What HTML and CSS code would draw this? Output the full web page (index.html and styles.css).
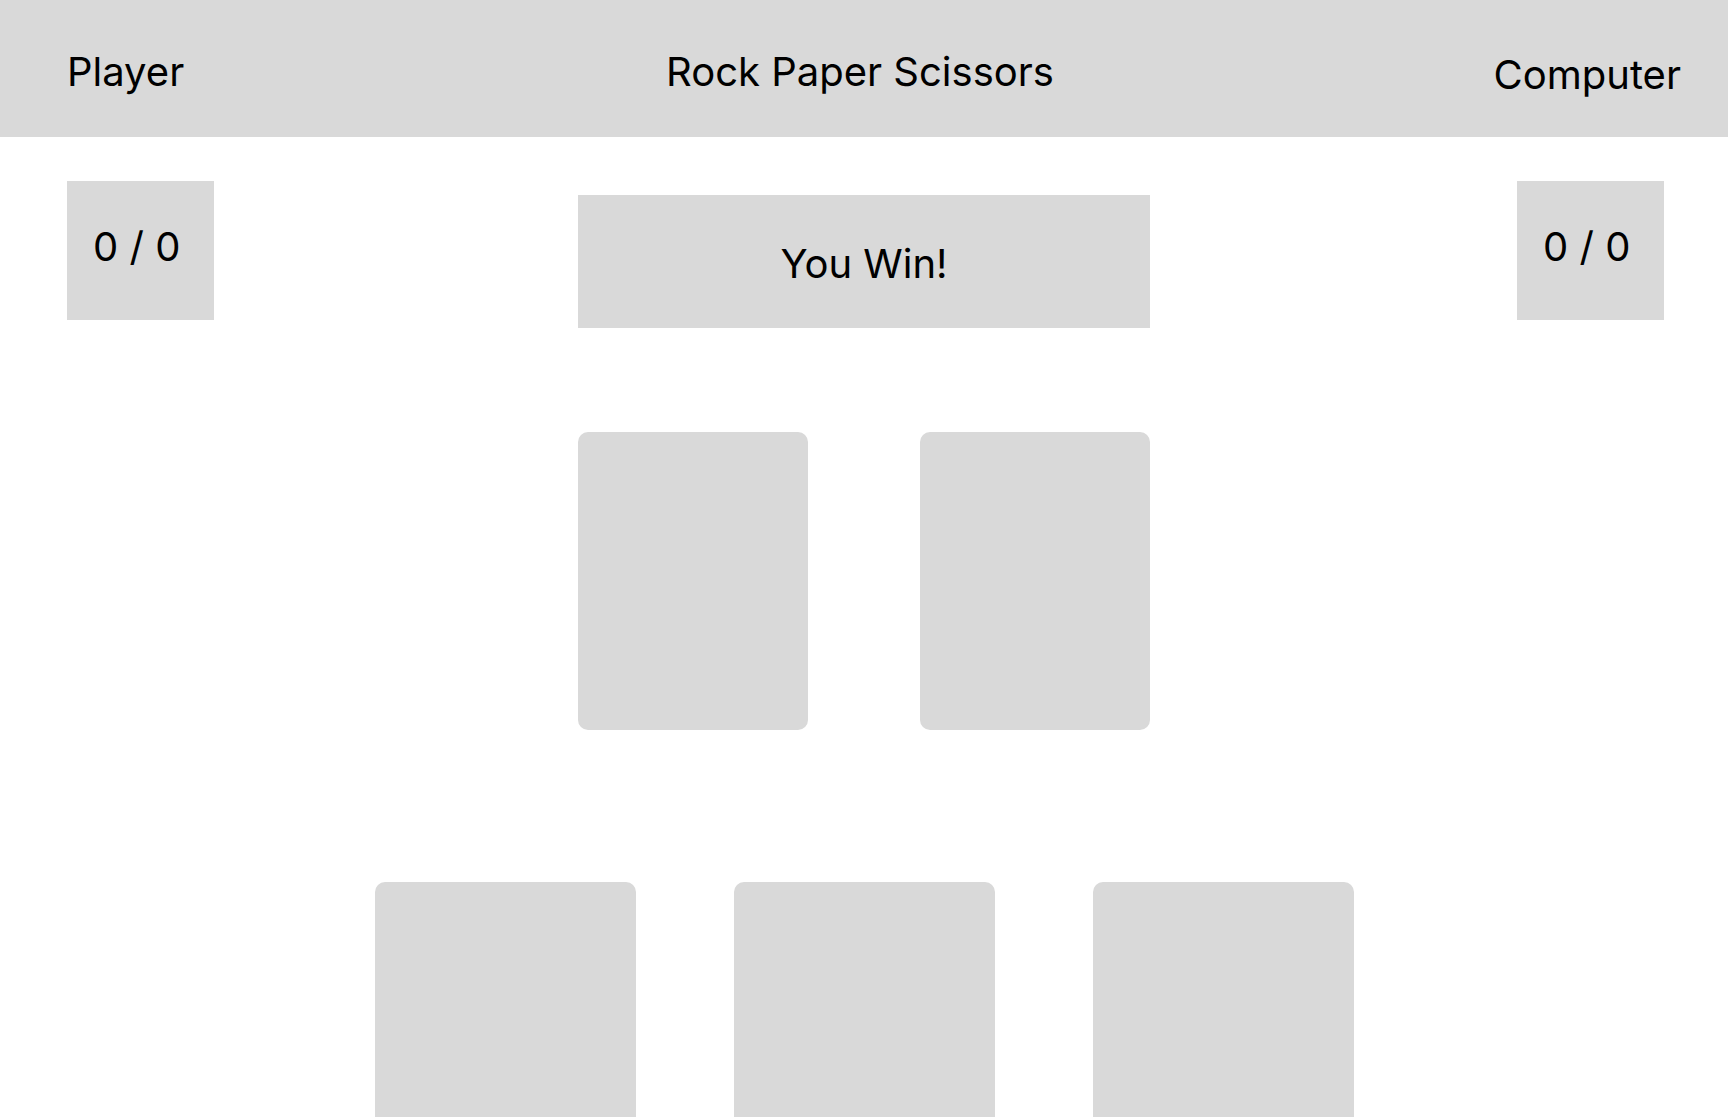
FILE: index.html
```html
<!doctype html>
<html>
<head>
<title>Rock Paper Scissors</title>
<link rel="stylesheet" href="styles.css">
</head>

<body>

<header class="topbar">
  <div class="side-label">Player</div>
  <h1 class="title">Rock Paper Scissors</h1>
  <div class="side-label computer">Computer</div>
</header>

<section class="scores">
  <div class="score">0 / 0</div>
  <div class="result">You Win!</div>
  <div class="score right">0 / 0</div>
</section>

<section class="arena">
  <div class="slot"></div>
  <div class="slot"></div>
</section>

<section class="choices">
  <div class="choice"></div>
  <div class="choice"></div>
  <div class="choice"></div>
</section>

</body>
</html>
```

FILE: styles.css
```css
/*
  Plain grey wireframe for the game board
*/

body {
  margin: 0;
  font-family: Inter, "Noto Sans", sans-serif;
  color: #000;
  background: #fff;
  overflow: hidden;
}

.topbar {
  display: grid;
  grid-template-columns: 1fr auto 1fr;
  align-items: center;
  height: 137px;
  box-sizing: border-box;
  padding: 6px 47px 0 67px;
  background: #d9d9d9;
}

.side-label {
  font-size: 40px;
}

.computer {
  justify-self: end;
  padding-top: 5px;
}

.title {
  margin: 0 28px 0 0;
  font-size: 40px;
  font-weight: 400;
}

.scores {
  display: grid;
  grid-template-columns: 1fr auto 1fr;
  align-items: start;
  padding: 0 64px 0 67px;
  margin-top: 44px;
}

.score {
  width: 147px;
  height: 139px;
  box-sizing: border-box;
  padding: 41px 0 0 26px;
  background: #d9d9d9;
  font-size: 40px;
}

.score.right {
  justify-self: end;
}

.result {
  display: flex;
  align-items: center;
  justify-content: center;
  width: 572px;
  height: 133px;
  box-sizing: border-box;
  padding-top: 4px;
  margin: 14px 3px 0 0;
  background: #d9d9d9;
  font-size: 40px;
}

.arena {
  display: flex;
  justify-content: center;
  gap: 112px;
  margin-top: 104px;
}

.slot {
  width: 230px;
  height: 298px;
  border-radius: 10px;
  background: #d9d9d9;
}

.choices {
  display: flex;
  justify-content: center;
  gap: 98px;
  margin-top: 152px;
}

.choice {
  width: 261px;
  height: 330px;
  border-radius: 10px;
  background: #d9d9d9;
}
```
